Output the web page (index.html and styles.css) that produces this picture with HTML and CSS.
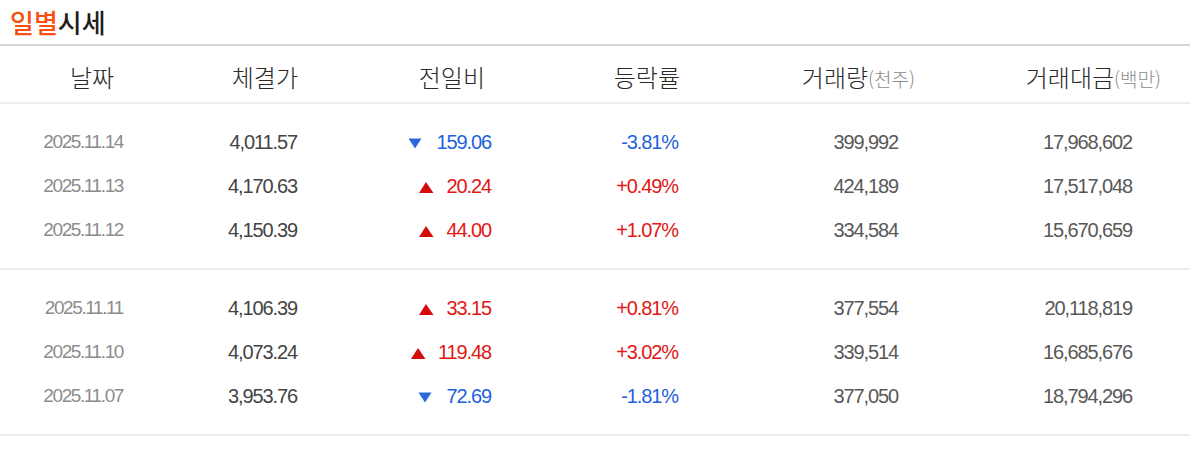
FILE: index.html
```html
<!DOCTYPE html>
<html lang="ko">
<head>
<meta charset="utf-8">
<title>일별시세</title>
<link rel="stylesheet" href="styles.css">
</head>
<body>
<div class="sise">
  <h3 class="title"><span class="hl">일별</span>시세</h3>
  <div class="table">
    <div class="row head">
      <div class="c1">날짜</div>
      <div class="c2">체결가</div>
      <div class="c3">전일비</div>
      <div class="c4">등락률</div>
      <div class="c5">거래량<span class="unit">(천주)</span></div>
      <div class="c6">거래대금<span class="unit">(백만)</span></div>
    </div>
    <div class="group">
      <div class="row">
        <div class="c1 date">2025.11.14</div>
        <div class="c2 num">4,011.57</div>
        <div class="c3 num down"><span class="ico"><svg width="15" height="11" viewBox="0 0 15 11"><polygon points="-0.5,0.5 12.5,0.5 6,10.5" fill="#2a6ad8"/></svg></span>159.06</div>
        <div class="c4 num down">-3.81%</div>
        <div class="c5 num vol">399,992</div>
        <div class="c6 num vol">17,968,602</div>
      </div>
      <div class="row">
        <div class="c1 date">2025.11.13</div>
        <div class="c2 num">4,170.63</div>
        <div class="c3 num up"><span class="ico"><svg width="15" height="11" viewBox="0 0 15 11"><polygon points="7,0 14.5,11 0,11" fill="#d40b0b"/></svg></span>20.24</div>
        <div class="c4 num up">+0.49%</div>
        <div class="c5 num vol">424,189</div>
        <div class="c6 num vol">17,517,048</div>
      </div>
      <div class="row">
        <div class="c1 date">2025.11.12</div>
        <div class="c2 num">4,150.39</div>
        <div class="c3 num up"><span class="ico"><svg width="15" height="11" viewBox="0 0 15 11"><polygon points="7,0 14.5,11 0,11" fill="#d40b0b"/></svg></span>44.00</div>
        <div class="c4 num up">+1.07%</div>
        <div class="c5 num vol">334,584</div>
        <div class="c6 num vol">15,670,659</div>
      </div>
    </div>
    <div class="group">
      <div class="row">
        <div class="c1 date">2025.11.11</div>
        <div class="c2 num">4,106.39</div>
        <div class="c3 num up"><span class="ico"><svg width="15" height="11" viewBox="0 0 15 11"><polygon points="7,0 14.5,11 0,11" fill="#d40b0b"/></svg></span>33.15</div>
        <div class="c4 num up">+0.81%</div>
        <div class="c5 num vol">377,554</div>
        <div class="c6 num vol">20,118,819</div>
      </div>
      <div class="row">
        <div class="c1 date">2025.11.10</div>
        <div class="c2 num">4,073.24</div>
        <div class="c3 num up"><span class="ico"><svg width="15" height="11" viewBox="0 0 15 11"><polygon points="7,0 14.5,11 0,11" fill="#d40b0b"/></svg></span>119.48</div>
        <div class="c4 num up">+3.02%</div>
        <div class="c5 num vol">339,514</div>
        <div class="c6 num vol">16,685,676</div>
      </div>
      <div class="row">
        <div class="c1 date">2025.11.07</div>
        <div class="c2 num">3,953.76</div>
        <div class="c3 num down"><span class="ico"><svg width="15" height="11" viewBox="0 0 15 11"><polygon points="-0.5,0.5 12.5,0.5 6,10.5" fill="#2a6ad8"/></svg></span>72.69</div>
        <div class="c4 num down">-1.81%</div>
        <div class="c5 num vol">377,050</div>
        <div class="c6 num vol">18,794,296</div>
      </div>
    </div>
  </div>
</div>
</body>
</html>
```
FILE: styles.css
```css
html, body {
  margin: 0;
  padding: 0;
  background: #fff;
}
body {
  font-family: "Noto Sans CJK KR", "Liberation Sans", sans-serif;
  color: #333;
}
.sise {
  width: 1190px;
}
.title {
  margin: 0;
  height: 44px;
  line-height: 44px;
  padding-left: 10px;
  font-size: 26px;
  font-weight: 500;
  color: #1f1f1f;
}
.title .hl {
  color: #f8500f;
}
.table {
  border-top: 2px solid #d6d6d6;
}
.row {
  display: grid;
  grid-template-columns: 184px 161px 215px 172px 250px 208px;
  height: 44px;
  line-height: 44px;
}
.head {
  height: 50px;
  line-height: 50px;
  padding-top: 6px;
  border-bottom: 2px solid #ececec;
  font-size: 24px;
  font-weight: 300;
  color: #2a2a2a;
}
.head > div {
  text-align: right;
  white-space: nowrap;
}
.head .c1 { text-align: center; }
.head .c2 { padding-right: 47px; }
.head .c3 { padding-right: 75px; }
.head .c4 { padding-right: 52px; }
.head .c5 { padding-right: 67px; }
.head .c6 { padding-right: 29px; }
.unit {
  font-size: 19px;
  color: #8a8a8a;
}
.group {
  padding: 16px 0;
  border-bottom: 2px solid #ececec;
}
.group .row > div {
  text-align: right;
  white-space: nowrap;
  font-family: "Liberation Sans", sans-serif;
}
.date {
  font-size: 19px;
  letter-spacing: -1.4px;
  color: #8c8c8c;
  padding-right: 61px;
}
.num {
  font-size: 20px;
  letter-spacing: -1.1px;
  color: #444;
}
.vol { color: #585858; }
.up { color: #e41616; }
.down { color: #1d62dd; }
.group .c2 { padding-right: 48px; }
.group .c3 {
  padding-right: 69px;
  display: flex;
  justify-content: flex-end;
  align-items: center;
}
.group .c4 { padding-right: 54px; }
.group .c5 { padding-right: 84px; }
.group .c6 { padding-right: 58px; }
.ico {
  display: inline-flex;
  width: 15px;
  height: 11px;
  margin-right: 12px;
  margin-top: 2px;
}
```
